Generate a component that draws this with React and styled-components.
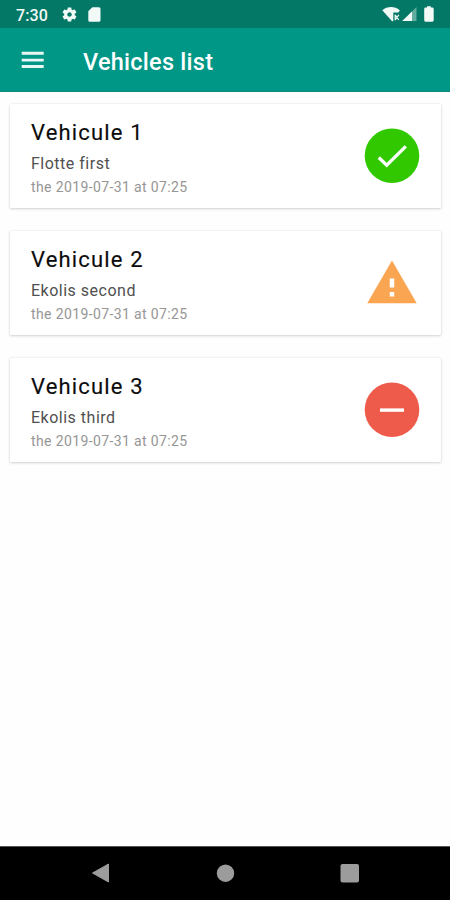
import styled from "styled-components";
import { createGlobalStyle } from "styled-components";

const GlobalStyle = createGlobalStyle`
  body {
    margin: 0;
    background: #fefefe;
    font-family: Roboto, "Liberation Sans", sans-serif;
  }
  svg {
    display: block;
    flex: none;
  }
`

const Screen = styled.div`
  display: flex;
  flex-direction: column;
  height: 900px;
  width: 450px;
  overflow: hidden;
`;

// Status bar
const StatusBar = styled.header`
  display: flex;
  align-items: center;
  height: 28px;
  padding: 0 15px 0 16px;
  box-sizing: border-box;
  background: #037866;
  color: #f2faf8;
`;

const Clock = styled.span`
  width: 45px;
  font-size: 16px;
  font-weight: 500;
  line-height: 28px;
  padding-top: 3px;
  letter-spacing: 0.1px;
`;

const StatusIcons = styled.div`
  display: flex;
  align-items: center;
  margin-left: ${(props) => (props.$right ? "auto" : "0")};
`;

// Toolbar
const Toolbar = styled.div`
  display: flex;
  align-items: center;
  height: 64px;
  padding-left: 21px;
  box-sizing: border-box;
  background: #009787;
  border-bottom: 1px solid #148879;
  color: white;
`;

const MenuButton = styled.button`
  width: 62px;
  padding: 0;
  border: 0;
  background: none;
  color: #e8f7f4;
`;

const ToolbarTitle = styled.h1`
  margin: 4px 0 0;
  font-size: 23.5px;
  font-weight: 500;
  line-height: 28px;
  letter-spacing: 0.25px;
`;

// Vehicle cards
const List = styled.main`
  flex: 1;
  display: flex;
  flex-direction: column;
  gap: 23px;
  padding: 12px 9px 0 10px;
`;

const Card = styled.section`
  display: flex;
  align-items: center;
  justify-content: space-between;
  height: 104px;
  padding: 0 21px;
  box-sizing: border-box;
  background: white;
  border-radius: 1px;
  box-shadow: 0 1px 3px rgba(0, 0, 0, 0.16), 0 0 2px rgba(0, 0, 0, 0.1);
`;

const Name = styled.h2`
  margin: 4px 0 0;
  font-size: 22px;
  font-weight: 400;
  line-height: 31px;
  letter-spacing: 1.15px;
  color: #0c0c0c;
  -webkit-text-stroke: 0.15px #0c0c0c;
`;

const Fleet = styled.p`
  margin: 3px 0 0;
  font-size: 16px;
  line-height: 26px;
  letter-spacing: 0.5px;
  color: #505050;
`;

const Updated = styled.p`
  margin: -1px 0 1px;
  font-size: 14px;
  line-height: 23px;
  letter-spacing: 0.38px;
  color: #969696;
`;

// Bottom navigation
const NavBar = styled.nav`
  display: flex;
  justify-content: space-between;
  height: 54px;
  padding: 16px 90px 0 91px;
  box-sizing: border-box;
  background: black;
  border-top: 1px solid #555;
`;

const OkIcon = () => (
  <svg width="56" height="56" viewBox="0 0 56 56">
    <circle cx="28" cy="27.7" r="27.3" fill="#32c800" />
    <path d="M14.8 29.5l7.9 7.7L41.8 18.3" fill="none" stroke="white" strokeWidth="3.2" />
  </svg>
);

const WarningIcon = () => (
  <svg width="56" height="54" viewBox="-0.44 0 24.89 24">
    <path
      d="M1 21h22L12 2 1 21zm12-3h-2v-2h2v2zm0-4h-2v-4h2v4z"
      fill="#faa552"
    />
  </svg>
);

const StopIcon = () => (
  <svg width="56" height="56" viewBox="0 0 56 56">
    <circle cx="28" cy="27.7" r="27.3" fill="#ef5b4b" />
    <rect x="16" y="26.4" width="24" height="3.4" fill="white" />
  </svg>
);

const icons = { ok: OkIcon, warning: WarningIcon, stop: StopIcon };

const vehicles = [
  { name: "Vehicule 1", fleet: "Flotte first", updated: "the 2019-07-31 at 07:25", status: "ok" },
  { name: "Vehicule 2", fleet: "Ekolis second", updated: "the 2019-07-31 at 07:25", status: "warning" },
  { name: "Vehicule 3", fleet: "Ekolis third", updated: "the 2019-07-31 at 07:25", status: "stop" },
];

function VehicleCard({ name, fleet, updated, status }) {
  const Icon = icons[status];
  return (
    <Card>
      <div>
        <Name>{name}</Name>
        <Fleet>{fleet}</Fleet>
        <Updated>{updated}</Updated>
      </div>
      <Icon />
    </Card>
  );
}

export default function App() {
  return (
    <Screen>
      <GlobalStyle />
      <StatusBar>
        <Clock>7:30</Clock>
        <StatusIcons>
          <svg width="17" height="17" viewBox="0 0 24 24" fill="currentColor">
            <path d="M19.43 12.98c.04-.32.07-.64.07-.98s-.03-.66-.07-.98l2.11-1.65c.19-.15.24-.42.12-.64l-2-3.46c-.12-.22-.39-.3-.61-.22l-2.49 1c-.52-.4-1.08-.73-1.69-.98l-.38-2.65C14.46 2.18 14.25 2 14 2h-4c-.25 0-.46.18-.49.42l-.38 2.65c-.61.25-1.17.59-1.69.98l-2.49-1c-.23-.09-.49 0-.61.22l-2 3.46c-.13.22-.07.49.12.64l2.11 1.65c-.04.32-.07.65-.07.98s.03.66.07.98l-2.11 1.65c-.19.15-.24.42-.12.64l2 3.46c.12.22.39.3.61.22l2.49-1c.52.4 1.08.73 1.69.98l.38 2.65c.03.24.24.42.49.42h4c.25 0 .46-.18.49-.42l.38-2.65c.61-.25 1.17-.59 1.69-.98l2.49 1c.23.09.49 0 .61-.22l2-3.46c.12-.22.07-.49-.12-.64l-2.11-1.65zM12 15.2c-1.77 0-3.2-1.43-3.2-3.2s1.43-3.2 3.2-3.2 3.2 1.43 3.2 3.2-1.43 3.2-3.2 3.2z" />
          </svg>
          <svg width="24" height="16" viewBox="0 0 24 16">
            <path d="M14.3 1.2h6.7a1.5 1.5 0 0 1 1.5 1.5v11.5a1.5 1.5 0 0 1-1.5 1.5h-9.2a1.5 1.5 0 0 1-1.5-1.5V5.2z" fill="currentColor" />
          </svg>
        </StatusIcons>
        <StatusIcons $right>
          <svg width="53" height="18" viewBox="0 0 53 18">
            <path d="M0.3 5.2C5.5 0.8 12.5 0.8 17.8 5.2L16.5 7.6H11.3V16.6L9.6 15.8z" fill="currentColor" />
            <path d="M13.2 9.8l3.6 5.2M16.8 9.8l-3.6 5.2M13.2 9.8v5.4" fill="none" stroke="currentColor" strokeWidth="1.2" />
            <path d="M34.5 2v14H20.5z" fill="currentColor" opacity="0.4" />
            <path d="M30 6.5V16h-9.8z" fill="currentColor" />
            <path d="M45 2.6V1.2h3.8v1.4h1.5a1.4 1.4 0 0 1 1.4 1.4v11.3a1.4 1.4 0 0 1-1.4 1.4h-6.7a1.4 1.4 0 0 1-1.4-1.4v-11.3a1.4 1.4 0 0 1 1.4-1.4z" fill="currentColor" />
          </svg>
        </StatusIcons>
      </StatusBar>
      <Toolbar>
        <MenuButton aria-label="Menu">
          <svg width="24" height="18" viewBox="0 0 24 18" fill="currentColor">
            <path d="M0.7 0.8h22v2.9h-22zM0.7 7.7h22v2.9h-22zM0.7 14.1h22v2.9h-22z" />
          </svg>
        </MenuButton>
        <ToolbarTitle>Vehicles list</ToolbarTitle>
      </Toolbar>
      <List>
        {vehicles.map((vehicle) => (
          <VehicleCard key={vehicle.name} {...vehicle} />
        ))}
      </List>
      <NavBar>
        <svg width="19" height="20" viewBox="0 0 19 20">
          <path d="M17.5 1v18L1.5 10z" fill="#9c9c9c" stroke="#9c9c9c" strokeLinejoin="round" />
        </svg>
        <svg width="20" height="20" viewBox="0 0 20 20">
          <circle cx="10.5" cy="10.2" r="8.7" fill="#9c9c9c" />
        </svg>
        <svg width="20" height="20" viewBox="0 0 20 20">
          <rect x="0.5" y="1" width="18.5" height="18.5" rx="2" fill="#9c9c9c" />
        </svg>
      </NavBar>
    </Screen>
  );
}
